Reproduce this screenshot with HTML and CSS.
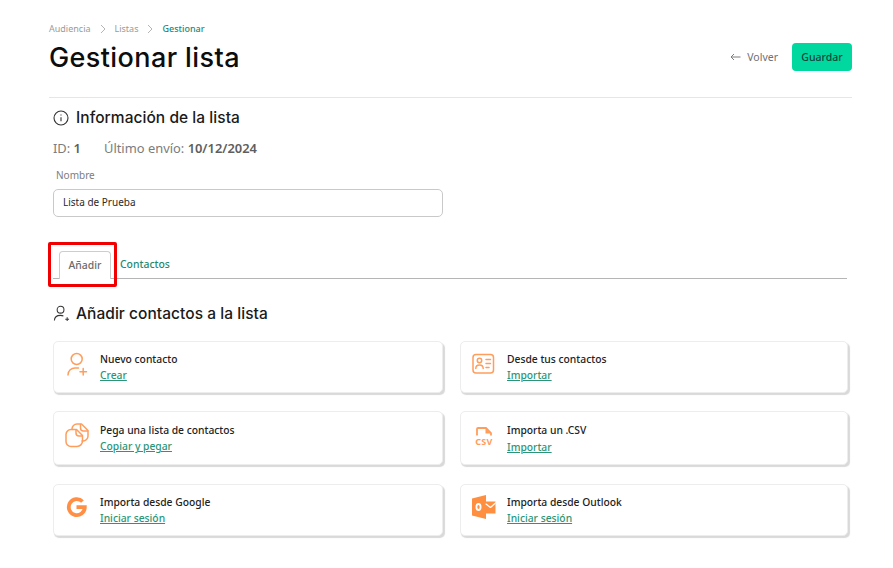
FILE: index.html
```html
<!DOCTYPE html>
<html lang="es">
<head>
<meta charset="utf-8">
<title>Gestionar lista</title>
<link rel="stylesheet" href="styles.css">
</head>
<body>
<main class="page">
  <nav class="crumbs">
    <span>Audiencia</span>
    <svg class="chev" viewBox="0 0 8 10"><path d="M2 1l4 4-4 4"/></svg>
    <span>Listas</span>
    <svg class="chev" viewBox="0 0 8 10"><path d="M2 1l4 4-4 4"/></svg>
    <span class="current">Gestionar</span>
  </nav>
  <header class="head">
    <h1>Gestionar lista</h1>
    <div class="actions">
      <a class="back"><svg class="arrow" viewBox="0 0 11 8"><path d="M10.5 4H1M4 1L1 4l3 3"/></svg>Volver</a>
      <button class="save">Guardar</button>
    </div>
  </header>
  <section class="inner">
    <h2 class="sec first">
      <svg class="sec-icon" viewBox="0 0 16 16"><circle cx="8" cy="8" r="7"/><path d="M8 7.2v4M8 4.6v1"/></svg>
      Información de la lista
    </h2>
    <p class="meta"><span>ID: <b>1</b></span><span>Último envío: <b>10/12/2024</b></span></p>
    <label class="label" for="nombre">Nombre</label>
    <input class="input" id="nombre" value="Lista de Prueba">
    <div class="tabs">
      <span class="tab active">Añadir<i class="mark"></i></span>
      <span class="tab">Contactos</span>
    </div>
    <h2 class="sec second">
      <svg class="sec-icon" viewBox="0 0 18 18"><circle cx="8" cy="5" r="3.6"/><path d="M1.5 16.5c0-3.5 2.6-5.5 6.5-5.5 1.2 0 2.2.2 3 .6M13 15h4M15 13v4"/></svg>
      Añadir contactos a la lista
    </h2>
    <div class="cards">
      <article class="card">
        <svg class="icon" viewBox="0 0 24 24"><circle cx="11.700" cy="6" r="5.500"/><path d="M3 22c0-4.500 3.500-7 7-7h3.500M15 18.700h6.500M18.200 15.500v6.400"/></svg>
        <div><h3>Nuevo contacto</h3><a>Crear</a></div>
      </article>
      <article class="card">
        <svg class="icon" viewBox="0 0 24 24"><rect x="1" y="1.500" width="20.500" height="18.500" rx="3"/><circle cx="7.500" cy="7.500" r="2.200"/><path d="M3.800 15.500c0-2.500 1.500-3.600 3.700-3.600s3.700 1.100 3.700 3.600M14 6.500h4.500M14 10.500h4.500M14 14.500h3"/></svg>
        <div><h3>Desde tus contactos</h3><a>Importar</a></div>
      </article>
      <article class="card">
        <svg class="icon" viewBox="0 1 24 24"><path d="M7 6.500V6a5 5 0 0 1 5-5h4.500L23 7.500V13a5 5 0 0 1-5 5h-1"/><path d="M15.500 1.500V5a3 3 0 0 0 3 3h4"/><path d="M6 6.500h5.500L17.500 12.500V18a5.500 5.500 0 0 1-5.500 5.500H6A5 5 0 0 1 1 18.500v-7a5 5 0 0 1 5-5z"/><path d="M11 7v3a3 3 0 0 0 3 3h3"/></svg>
        <div><h3>Pega una lista de contactos</h3><a>Copiar y pegar</a></div>
      </article>
      <article class="card">
        <span class="csv">
          <svg viewBox="0 0 16 9"><path d="M1 8.500V2a1 1 0 0 1 1-1h8l5 5v2.500"/><path class="fold" d="M9.500 1l5.500 5.500H9.500z"/></svg>
          <b>CSV</b>
        </span>
        <div><h3>Importa un .CSV</h3><a class="lower">Importar</a></div>
      </article>
      <article class="card">
        <svg class="icon" viewBox="0 0 24 24"><path class="thick" d="M17.500 5.500A8 8 0 1 0 19.800 11.200H11.500"/></svg>
        <div><h3>Importa desde Google</h3><a>Iniciar sesión</a></div>
      </article>
      <article class="card">
        <svg class="icon solid" viewBox="0 1.500 24 24"><path d="M0 4l14-3.500v24L0 21z"/><path d="M13 7h10.500v12H13z"/><path class="line" d="M14 9.500l4.500 3.500 5-4.500"/><ellipse class="hole" cx="6.500" cy="12.500" rx="2.100" ry="3"/></svg>
        <div><h3>Importa desde Outlook</h3><a>Iniciar sesión</a></div>
      </article>
    </div>
  </section>
</main>
</body>
</html>
```
FILE: styles.css
```css
* { box-sizing: border-box; }
html, body { margin: 0; background: #fff; }
body { font-family: "Noto Sans", "Open Sans", sans-serif; color: #1e1e1e; overflow: hidden; }
.page { padding: 22px 41px 0 49px; height: 568px; }
.crumbs { display: flex; align-items: center; height: 13px; font-size: 9px; color: #9a9a9a; gap: 8px; }
.crumbs .current { color: #1f8a70; font-weight: 500; }
.chev { width: 8px; height: 10px; fill: none; stroke: #b5b5b5; stroke-width: 1; }
.head { display: flex; align-items: center; justify-content: space-between; height: 63px; padding-bottom: 18px; border-bottom: 1px solid #e6e6e6; }
h1 { margin: 0; font-family: Inter, sans-serif; font-size: 27px; font-weight: 500; letter-spacing: 0.4px; color: #0d0d0d; }
.actions { display: flex; align-items: center; gap: 14px; }
.back { display: flex; align-items: center; gap: 6px; font-size: 10.500px; color: #6f6f6f; }
.arrow { width: 11px; height: 8px; fill: none; stroke: #7d7d7d; stroke-width: 1; }
.save { width: 60px; height: 28px; padding: 0; border: 0; border-radius: 4px; background: #00d8a0; color: #14443a; font: 500 10.500px "Noto Sans", sans-serif; }
.inner { padding-left: 4px; }
.sec { display: flex; align-items: center; gap: 6px; margin: 0; font-family: Inter, sans-serif; font-weight: 500; font-size: 15.500px; letter-spacing: 0.05px; color: #1a1a1a; }
.sec.first { height: 20px; margin-top: 9px; gap: 7px; }
.sec.second { height: 20px; margin-top: 24px; }
.sec-icon { width: 17px; height: 17px; fill: none; stroke: #333; stroke-width: 1.100; flex: none; }
.first .sec-icon { width: 16px; height: 16px; margin-top: 1px; }
.meta { display: flex; gap: 23px; margin: 11px 0 0; height: 20px; font-size: 12.900px; line-height: 20px; color: #7c7c7c; }
.meta b { font-weight: 600; color: #5e5e5e; }
.label { display: block; margin: 10px 0 0 3px; height: 15px; font-size: 10px; line-height: 15px; color: #7d7d7d; }
.input { display: block; width: 390px; height: 28px; margin-top: 6px; padding: 0 9px 2px; border: 1px solid #c9c9c9; border-radius: 5px; font: 400 10px "Noto Sans", sans-serif; color: #2a2a2a; outline: 0; background: #fff; }
.tabs { display: flex; align-items: flex-end; width: 794px; height: 27px; margin-top: 35px; padding-left: 6px; border-bottom: 1px solid #b5b5b5; }
.tab { position: relative; display: block; padding: 0 9px; height: 27px; font-size: 10.400px; line-height: 25px; font-weight: 500; color: #1f8a70; }
.tab + .tab { padding: 0; margin-left: 9px; line-height: 27px; }
.tab.active { width: 52px; padding: 0; text-align: center; background: #fff; color: #6b6b6b; border: 1px solid #cdcdcd; border-bottom: 0; border-radius: 4px 4px 0 0; margin-bottom: -1px; height: 28px; line-height: 26px; }
.mark { position: absolute; left: -12px; top: -10px; width: 69px; height: 45px; border: 3px solid #f00000; border-radius: 2px; }
.cards { display: grid; grid-template-columns: 390px 388px; grid-template-rows: 52px 54px 52px; gap: 18.300px 17px; margin-top: 18px; }
.card { display: flex; align-items: center; gap: 11px; padding: 0 0 0 11px; background: #fff; border: 1px solid #ededed; border-radius: 5px; box-shadow: 1.500px 2px 1px #d9d9d9; }
.card h3 { margin: 0; font-size: 10.300px; line-height: 16px; font-weight: 500; color: #222; }
.card a { display: block; font-size: 10.300px; line-height: 16px; font-weight: 500; color: #2c9577; text-decoration: underline; }
.card a.lower { margin-top: 1px; }
.icon { width: 24px; height: 24px; flex: none; margin-bottom: 4px; overflow: visible; fill: none; stroke: #ff9d5c; stroke-width: 1.500; stroke-linecap: round; stroke-linejoin: round; }
.icon .thick { stroke: #ff8f45; stroke-width: 3.800; stroke-linecap: butt; stroke-linejoin: miter; }
.icon.solid { stroke: none; fill: #ff8f40; }
.icon.solid .hole { fill: none; stroke: #fff; stroke-width: 1.800; }
.icon.solid .line { fill: none; stroke: #fff; stroke-width: 1.200; }
.csv { display: flex; flex-direction: column; align-items: center; width: 24px; flex: none; margin-top: -2px; }
.csv svg { width: 16px; height: 9px; fill: none; stroke: #ff9d5c; stroke-width: 1.800; }
.csv svg .fold { fill: #ff9d5c; stroke: none; }
.csv b { font: 700 9px/10px "Noto Sans", sans-serif; letter-spacing: 0.3px; color: #ff9d5c; margin-top: 1px; }
```
